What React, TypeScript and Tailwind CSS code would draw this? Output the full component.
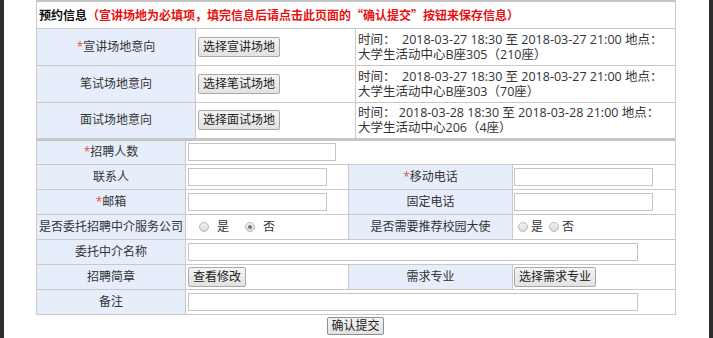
import React from "react";

const font = { fontFamily: '"Open Sans", "Noto Sans CJK SC", sans-serif' };
const cjk = { fontFamily: '"Noto Sans CJK SC", sans-serif' };

function Btn({ children }: { children: React.ReactNode }) {
  return (
    <span className="inline-flex h-[20px] items-center rounded-[2px] border border-[#a9a9a9] bg-gradient-to-b from-[#f4f4f4] to-[#e2e2e2] px-[4px] text-[12px] leading-none text-[#222]">
      {children}
    </span>
  );
}

function Input({ w }: { w: string }) {
  return <span className={`block h-[18px] border border-[#c4c4c4] bg-white ${w}`} />;
}

function Radio({ checked }: { checked?: boolean }) {
  return (
    <span className="inline-flex h-[10px] w-[10px] items-center justify-center rounded-full border border-[#b9b9b9] bg-gradient-to-b from-[#f2f2f2] to-[#dcdcdc]">
      {checked && <span className="h-[4px] w-[4px] rounded-full bg-[#777]" />}
    </span>
  );
}

const Star = () => <span className="text-[#f04a4a]">*</span>;

const td = "border border-[#c8c8c8]";
const label = `${td} bg-[#e7eefb] text-center text-[#333]`;

export default function App() {
  return (
    <div className="flex h-[338px] w-[713px] bg-white text-[12px] text-[#333]" style={font}>
      <div className="w-[4px] bg-[#2d2d2d]" />
      <div className="flex-1 pl-[32px]">
        <table className="w-[639px] table-fixed border-collapse">
          <colgroup>
            <col className="w-[159px]" />
            <col className="w-[160px]" />
            <col className="w-[320px]" />
          </colgroup>
          <tbody>
            <tr className="h-[27px]">
              <td colSpan={3} className="border border-t-[2px] border-[#c8c8c8] border-t-[#c4c4c4] pl-[2px] font-bold leading-[16px]" style={cjk}>
                <span className="text-[#111]">预约信息</span>
                <span className="text-[#e81010]">（宣讲场地为必填项，填完信息后请点击此页面的“确认提交”按钮来保存信息）</span>
              </td>
            </tr>
            {[
              { l: "宣讲场地意向", star: true, b: "选择宣讲场地", t1: "时间：  2018-03-27 18:30 至 2018-03-27 21:00 地点：", t2: "大学生活动中心B座305（210座）", h: "h-[37px]" },
              { l: "笔试场地意向", star: false, b: "选择笔试场地", t1: "时间：  2018-03-27 18:30 至 2018-03-27 21:00 地点：", t2: "大学生活动中心B座303（70座）", h: "h-[37px]" },
              { l: "面试场地意向", star: false, b: "选择面试场地", t1: "时间： 2018-03-28 18:30 至 2018-03-28 21:00 地点：", t2: "大学生活动中心206（4座）", h: "h-[36px]" },
            ].map((r) => (
              <tr key={r.l} className={r.h}>
                <td className={label}>
                  {r.star && <Star />}
                  {r.l}
                </td>
                <td className={`${td} pl-[2px]`}>
                  <Btn>{r.b}</Btn>
                </td>
                <td className={`${td} pl-[2px] text-[12.5px] leading-[15px] text-[#333]`}>
                  <div className="whitespace-pre">{r.t1}</div>
                  <div>{r.t2}</div>
                </td>
              </tr>
            ))}
          </tbody>
        </table>
        <table className="w-[639px] table-fixed border-collapse border-t-[2px] border-t-[#c4c4c4]">
          <colgroup>
            <col className="w-[149px]" />
            <col className="w-[163px]" />
            <col className="w-[164px]" />
            <col className="w-[163px]" />
          </colgroup>
          <tbody>
            <tr className="h-[25px]">
              <td className={label}>
                <Star />招聘人数
              </td>
              <td colSpan={3} className={`${td} pl-[2px]`}>
                <Input w="w-[148px]" />
              </td>
            </tr>
            <tr className="h-[25px]">
              <td className={label}>联系人</td>
              <td className={`${td} pl-[2px]`}>
                <Input w="w-[139px]" />
              </td>
              <td className={label}>
                <Star />移动电话
              </td>
              <td className={`${td} pl-[1px]`}>
                <Input w="w-[139px]" />
              </td>
            </tr>
            <tr className="h-[25px]">
              <td className={label}>
                <Star />邮箱
              </td>
              <td className={`${td} pl-[2px]`}>
                <Input w="w-[139px]" />
              </td>
              <td className={label}>固定电话</td>
              <td className={`${td} pl-[1px]`}>
                <Input w="w-[139px]" />
              </td>
            </tr>
            <tr className="h-[25px]">
              <td className={`${label} whitespace-nowrap`}>是否委托招聘中介服务公司</td>
              <td className={`${td} pl-[13px]`}>
                <span className="flex items-center">
                  <Radio />
                  <span className="ml-[8px]">是</span>
                  <span className="ml-[16px] flex items-center">
                    <Radio checked />
                  </span>
                  <span className="ml-[8px]">否</span>
                </span>
              </td>
              <td className={label}>是否需要推荐校园大使</td>
              <td className={`${td} pl-[5px]`}>
                <span className="flex items-center">
                  <Radio />
                  <span className="ml-[3px]">是</span>
                  <span className="ml-[6px] flex items-center">
                    <Radio />
                  </span>
                  <span className="ml-[3px]">否</span>
                </span>
              </td>
            </tr>
            <tr className="h-[25px]">
              <td className={label}>委托中介名称</td>
              <td colSpan={3} className={`${td} pl-[2px]`}>
                <Input w="w-[450px]" />
              </td>
            </tr>
            <tr className="h-[25px]">
              <td className={label}>招聘简章</td>
              <td className={`${td} pl-[2px]`}>
                <Btn>查看修改</Btn>
              </td>
              <td className={label}>需求专业</td>
              <td className={`${td} pl-[1px]`}>
                <Btn>选择需求专业</Btn>
              </td>
            </tr>
            <tr className="h-[25px]">
              <td className={label}>备注</td>
              <td colSpan={3} className={`${td} pl-[2px]`}>
                <Input w="w-[450px]" />
              </td>
            </tr>
          </tbody>
        </table>
        <div className="flex w-[639px] justify-center pt-[2px]">
          <span className="inline-flex h-[18px] items-center rounded-[2px] border border-[#8f8f8f] bg-gradient-to-b from-[#f4f4f4] to-[#e2e2e2] px-[3px] text-[12px] leading-none text-[#222]">
            确认提交
          </span>
        </div>
      </div>
      <div className="w-[4px] bg-[#2d2d2d]" />
    </div>
  );
}
